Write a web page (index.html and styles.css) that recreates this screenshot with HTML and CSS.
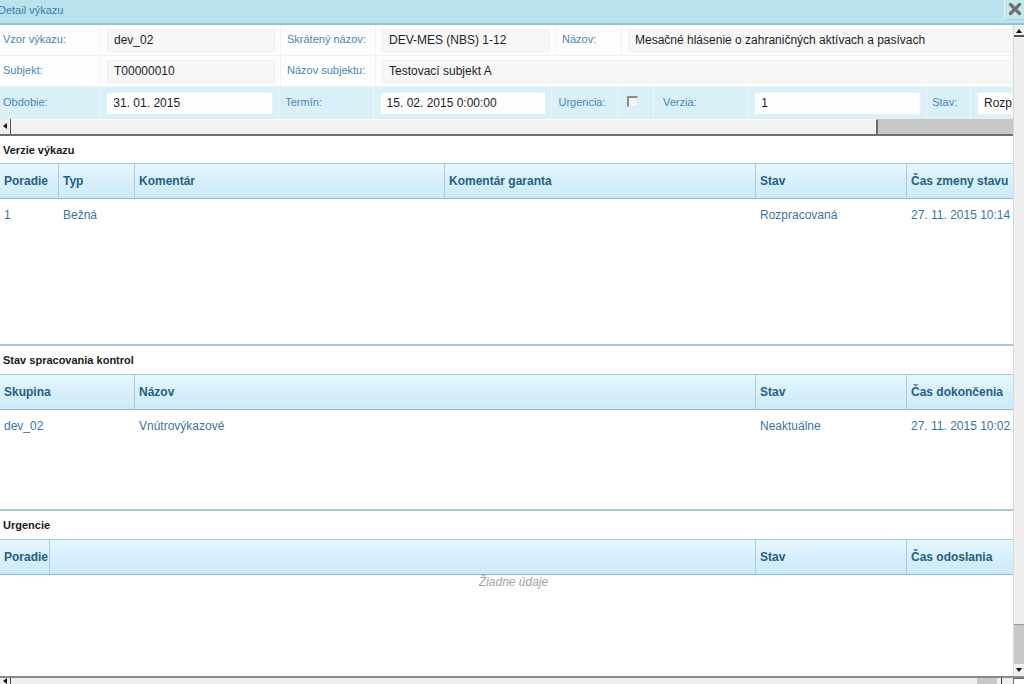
FILE: index.html
```html
<!DOCTYPE html>
<html lang="sk">
<head>
<meta charset="utf-8">
<title>Detail výkazu</title>
<link rel="stylesheet" href="styles.css">
</head>
<body>
<div class="dialog">
  <div class="titlebar">
    <span class="title">Detail výkazu</span>
    <span class="close">
      <svg width="14" height="14" viewBox="0 0 14 14"><path d="M2.5 2.5 L11.5 11.5 M11.5 2.5 L2.5 11.5" stroke="#6f6f6f" stroke-width="3.2" stroke-linecap="round"/></svg>
    </span>
  </div>
  <div class="main">
    <div class="content">
      <div class="form">
        <div class="frow r1">
          <div class="lbl w100">Vzor výkazu:</div>
          <div class="fld w180"><div class="inp">dev_02</div></div>
          <div class="lbl w95">Skrátený názov:</div>
          <div class="fld w180"><div class="inp">DEV-MES (NBS) 1-12</div></div>
          <div class="lbl w65">Názov:</div>
          <div class="fld grow"><div class="inp open">Mesačné hlásenie o zahraničných aktívach a pasívach</div></div>
        </div>
        <div class="frow r2">
          <div class="lbl w100">Subjekt:</div>
          <div class="fld w180"><div class="inp">T00000010</div></div>
          <div class="lbl w95">Názov subjektu:</div>
          <div class="fld grow"><div class="inp open">Testovací subjekt A</div></div>
        </div>
        <div class="frow r3">
          <div class="lbl w100">Obdobie:</div>
          <div class="fld w180"><div class="inp">31. 01. 2015</div></div>
          <div class="lbl w95">Termín:</div>
          <div class="fld w180"><div class="inp">15. 02. 2015 0:00:00</div></div>
          <div class="lbl w65">Urgencia:</div>
          <div class="fld w35"><span class="chk"></span></div>
          <div class="lbl w95 verzia">Verzia:</div>
          <div class="fld w180"><div class="inp">1</div></div>
          <div class="lbl w45">Stav:</div>
          <div class="fld grow"><div class="inp open">Rozp</div></div>
        </div>
      </div>
      <div class="hscroll">
        <span class="arrow-l"></span>
        <span class="thumb"></span>
        <span class="track"></span>
      </div>

      <section class="sec s1">
        <div class="sec-title">Verzie výkazu</div>
        <div class="thead">
          <div class="th" style="width:59px">Poradie</div>
          <div class="th" style="width:76px">Typ</div>
          <div class="th" style="width:310px">Komentár</div>
          <div class="th" style="width:311px">Komentár garanta</div>
          <div class="th" style="width:151px">Stav</div>
          <div class="th last">Čas zmeny stavu</div>
        </div>
        <div class="tbody">
          <div class="tr">
            <div class="td" style="width:59px">1</div>
            <div class="td" style="width:76px">Bežná</div>
            <div class="td" style="width:310px"></div>
            <div class="td" style="width:311px"></div>
            <div class="td" style="width:151px">Rozpracovaná</div>
            <div class="td last">27. 11. 2015 10:14</div>
          </div>
        </div>
      </section>

      <section class="sec s2">
        <div class="sec-title">Stav spracovania kontrol</div>
        <div class="thead">
          <div class="th" style="width:135px">Skupina</div>
          <div class="th" style="width:621px">Názov</div>
          <div class="th" style="width:151px">Stav</div>
          <div class="th last">Čas dokončenia</div>
        </div>
        <div class="tbody">
          <div class="tr">
            <div class="td" style="width:135px">dev_02</div>
            <div class="td" style="width:621px">Vnútrovýkazové</div>
            <div class="td" style="width:151px">Neaktuálne</div>
            <div class="td last">27. 11. 2015 10:02</div>
          </div>
        </div>
      </section>

      <section class="sec s3">
        <div class="sec-title">Urgencie</div>
        <div class="thead">
          <div class="th" style="width:50px">Poradie</div>
          <div class="th" style="width:706px"></div>
          <div class="th" style="width:151px">Stav</div>
          <div class="th last">Čas odoslania</div>
        </div>
        <div class="tbody">
          <div class="empty">Žiadne údaje</div>
        </div>
      </section>
    </div>
    <div class="vscroll">
      <span class="arrow-u"></span>
      <span class="vtrack"></span>
      <span class="vthumb"></span>
      <span class="arrow-d"></span>
    </div>
  </div>
  <div class="bscroll">
    <span class="arrow-l"></span>
    <span class="btrack"></span>
    <span class="bthumb"></span>
    <span class="arrow-r"></span>
    <span class="corner"></span>
  </div>
</div>
</body>
</html>
```

FILE: styles.css
```css
* { box-sizing: border-box; }
html, body { margin: 0; padding: 0; }
body {
  width: 1024px;
  height: 684px;
  overflow: hidden;
  background: #fff;
  font-family: "Liberation Sans", Arial, sans-serif;
  font-size: 12px;
  color: #222;
}
.dialog { display: flex; flex-direction: column; height: 684px; }

.titlebar {
  height: 25px;
  flex: none;
  display: flex;
  align-items: center;
  justify-content: space-between;
  background: #bae2ec;
  border-bottom: 2px solid #93c4d3;
}
.title { color: #3a7cae; margin-left: -2px; margin-top: -3px; font-size: 11px; }
.close {
  width: 20px; height: 21px;
  margin-top: -4px;
  display: flex; align-items: center; justify-content: center;
  background: #c6e6ee;
  border-left: 1px solid #e3f3f7;
  border-bottom: 1px solid #a7d2de;
}

.main { flex: 1; display: flex; min-height: 0; }
.content { width: 1013px; flex: none; display: flex; flex-direction: column; }

/* form */
.form { display: flex; flex-direction: column; }
.frow { display: flex; height: 31px; align-items: stretch; }
.r1 { background: #fdfdfd; border-bottom: 1px solid #f0f2f3; }
.r2 { background: #fdfdfd; border-bottom: 1px solid #f0f2f3; }
.r3 { background: #daf0f9; height: 32px; }
.lbl {
  display: flex; align-items: center;
  padding-left: 3px;
  color: #4a86b4;
  font-size: 11px;
  white-space: nowrap;
  border-right: 1px solid #edf5f8;
  padding-bottom: 2px;
}
.r1 .lbl, .r1 .fld, .r2 .lbl, .r2 .fld { border-right-color: #f2f2f2; }
.lbl.w95, .lbl.w65 { padding-left: 6px; }
.lbl.w45 { padding-left: 5px; }
.lbl.verzia { padding-left: 9px; }
.fld {
  display: flex; align-items: center;
  padding: 0 5px 0 6px;
  border-right: 1px solid #e9f5fa;
}
.w100 { width: 101px; }
.w180 { width: 180px; }
.w95 { width: 95px; }
.w65 { width: 66px; }
.w45 { width: 44px; }
.w35 { width: 36px; padding-left: 9px; }
.grow { flex: 1; padding-right: 0; }
.inp {
  width: 100%;
  height: 23px;
  display: flex; align-items: center;
  padding-left: 6px;
  background: #f7f7f7;
  border: 1px solid #eeeeee;
  border-radius: 2px;
  color: #1e1e1e;
  white-space: nowrap;
  overflow: hidden;
}
.r3 .inp { background: #fdfdfd; border-color: #e6f1f5; height: 23px; }
.inp.open { border-right: none; border-radius: 2px 0 0 2px; }
.chk {
  width: 11px; height: 11px;
  border-top: 2px solid #8a8a8a;
  border-left: 2px solid #8a8a8a;
  border-right: 1px solid #e6e6e6;
  border-bottom: 1px solid #e6e6e6;
  background: #f3f3f3;
  margin-top: -3px;
}

.hscroll {
  height: 17px;
  display: flex;
  background: #eeeeee;
  border-bottom: 2px solid #6e6e6e;
}
.arrow-l {
  width: 11px; flex: none;
  position: relative;
  border-right: 1px solid #555;
}
.arrow-l::after {
  content: "";
  position: absolute; left: 3px; top: 4px;
  border-right: 4px solid #111;
  border-top: 3px solid transparent;
  border-bottom: 3px solid transparent;
}
.hscroll .thumb {
  width: 867px;
  background: #f2f2f2;
  border-right: 2px solid #6e6e6e;
  border-top: 1px solid #fafafa;
}
.hscroll .track { flex: 1; background: #c8c8c8; }

/* sections */
.sec { display: flex; flex-direction: column; }
.sec-title {
  height: 28px;
  display: flex; align-items: center;
  padding-left: 3px;
  font-weight: bold;
  font-size: 11px;
  color: #1a1a1a;
}
.s1 .sec-title { height: 27px; }
.s2, .s3 { border-top: 2px solid #a9c8d6; }
.thead {
  height: 36px;
  display: flex;
  background: linear-gradient(#e6f6fd, #c9eaf8);
  border-top: 1px solid #a9cbdb;
  border-bottom: 1px solid #94b9cb;
}
.th {
  flex: none;
  display: flex; align-items: center;
  padding-left: 4px;
  font-weight: bold;
  color: #265f82;
  border-right: 1px solid #a7cddd;
  white-space: nowrap;
}
.th.last, .td.last { flex: 1; border-right: none; }
.tbody { position: relative; }
.s1 .tbody { height: 145px; }
.s2 .tbody { height: 99px; }
.s3 .tbody { height: 101px; }
.tr { display: flex; height: 31px; }
.td {
  flex: none;
  display: flex; align-items: center;
  padding-left: 4px;
  color: #3b74a0;
  white-space: nowrap;
}
.empty {
  text-align: center;
  font-style: italic;
  color: #a4a4a4;
  font-size: 12px;
  padding-top: 0;
  padding-left: 14px;
}

/* vertical scrollbar */
.vscroll {
  flex: 1;
  display: flex; flex-direction: column;
  background: #efefef;
  border-left: 1px solid #d8d8d8;
  position: relative;
}
.arrow-u { height: 12px; position: relative; border-bottom: 2px solid #555; }
.arrow-u::after {
  content: ""; position: absolute; left: 2px; top: 4px;
  border-bottom: 4px solid #111;
  border-left: 3px solid transparent;
  border-right: 3px solid transparent;
}
.vtrack { flex: 1; }
.vthumb { height: 40px; background: #c8c8c8; border-top: 1px solid #999; }
.arrow-d { height: 12px; position: relative; }
.arrow-d::after {
  content: ""; position: absolute; left: 2px; top: 4px;
  border-top: 4px solid #111;
  border-left: 3px solid transparent;
  border-right: 3px solid transparent;
}

/* bottom scrollbar */
.bscroll {
  height: 8px; flex: none;
  display: flex;
  background: #efefef;
  border-top: 2px solid #8a8a8a;
}
.bscroll .arrow-l { border-right: 1px solid #444; }
.bscroll .arrow-l::after { top: 0; }
.btrack { flex: 1; }
.bthumb { width: 20px; background: #c8c8c8; margin-right: 4px; }
.arrow-r { width: 8px; border-left: 1px solid #333; margin-right: 4px; }
.corner { width: 11px; border-left: 1px solid #666; border-top: 1px solid #666; background: #fff; }
```
